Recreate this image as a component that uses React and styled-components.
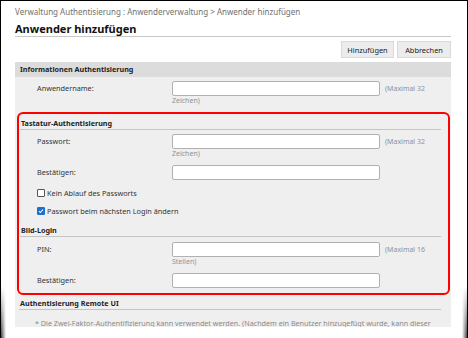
import React from 'react';
import styled, { createGlobalStyle } from 'styled-components';

const GlobalStyle = createGlobalStyle`
  html, body {
    margin: 0;
    padding: 0;
    background: #fff;
  }
  body {
    font-family: 'Noto Sans', 'Open Sans', sans-serif;
    color: #222;
  }
`;

const Frame = styled.div`
  position: relative;
  box-sizing: border-box;
  width: 468px;
  height: 338px;
  border-top: 1px solid #000;
  border-left: 1px solid #000;
  border-right: 1px solid #000;
  padding: 0 16px 0 14px;
  overflow: hidden;

  &::before,
  &::after {
    content: '';
    position: absolute;
    top: 285px;
    bottom: 0;
    width: 6px;
    -webkit-mask-image: linear-gradient(to bottom, transparent, #000);
  }
  &::before {
    left: -1px;
    background: linear-gradient(to right, rgba(0, 0, 0, 0.9), rgba(0, 0, 0, 0));
  }
  &::after {
    right: -1px;
    background: linear-gradient(to left, rgba(0, 0, 0, 0.9), rgba(0, 0, 0, 0));
  }
`;

const Breadcrumb = styled.div`
  font-size: 8px;
  color: #707070;
  line-height: 10px;
  padding-top: 6px;
  white-space: nowrap;
`;

const Title = styled.h1`
  margin: 5px 0 0;
  font-size: 11px;
  font-weight: 700;
  line-height: 13px;
  color: #111;
  padding-bottom: 1px;
  border-bottom: 1px solid #c8c8c8;
`;

const ButtonBar = styled.div`
  display: flex;
  justify-content: flex-end;
  gap: 3px;
  margin-top: 4px;
`;

const Button = styled.button`
  height: 17px;
  padding: 0;
  font-family: inherit;
  font-size: 7.4px;
  color: #222;
  background: #ececec;
  border: 1px solid #dadada;
  border-radius: 0;
  width: ${props => props.w}px;
`;

const Panel = styled.div`
  margin-top: 4px;
  background: #efefef;
  height: 265px;
  overflow: hidden;
`;

const PanelHeader = styled.div`
  height: 15px;
  line-height: 15px;
  background: #dcdcdc;
  font-size: 7.2px;
  font-weight: 700;
  padding-left: 5px;
  color: #222;
`;

const Row = styled.div`
  display: grid;
  grid-template-columns: ${props => props.labelWidth}px 208px 1fr;
  align-items: start;
  margin-top: ${props => props.top || 0}px;
`;

const Label = styled.div`
  font-size: 7.3px;
  line-height: 15px;
  padding-left: ${props => props.indent}px;
  color: #333;
`;

const Input = styled.input`
  box-sizing: border-box;
  height: 15px;
  width: 208px;
  margin: 0;
  border: 1px solid #b0b0b0;
  border-radius: 2px;
  background: #fff;
`;

const Note = styled.div`
  font-size: 7px;
  line-height: 15px;
  color: #8e929c;
  padding-left: 5px;
  white-space: nowrap;
`;

const SubNote = styled.div`
  grid-column: 2 / 4;
  font-size: 7px;
  line-height: 9px;
  color: #8e929c;
`;

const Highlight = styled.div`
  margin: 7px 1px 0 2px;
  border: 2px solid #f00;
  border-radius: 6px;
  padding-bottom: 5px;
`;

const SectionTitle = styled.div`
  margin: ${props => props.top || 0}px 7px 0 1px;
  padding: ${props => (props.tight ? 2 : 3)}px 0 0 1px;
  font-size: 7.2px;
  font-weight: 700;
  line-height: 12px;
  color: #222;
  border-bottom: 1px solid #c4c4c4;
`;

const CheckRow = styled.label`
  display: flex;
  align-items: center;
  gap: 2px;
  margin: ${props => props.top}px 0 0 18px;
  font-size: 7.3px;
  line-height: 10px;
  color: #333;
`;

const Box = styled.span`
  box-sizing: border-box;
  width: 8px;
  height: 8px;
  border: 1px solid ${props => (props.checked ? '#1d6fd0' : '#555')};
  border-radius: 1px;
  background: ${props => (props.checked ? '#1d6fd0' : '#fff')};
  display: flex;
  align-items: center;
  justify-content: center;
`;

const Outside = styled.div`
  padding: 0 3px 0 3px;
`;

const FootNote = styled.div`
  margin-top: 8px;
  padding-left: 17px;
  font-size: 7.2px;
  line-height: 10px;
  color: #8a8a8a;
  white-space: nowrap;
`;

function Field({ label, note, sub, indent, labelWidth, top }) {
  return (
    <Row labelWidth={labelWidth} top={top}>
      <Label indent={indent}>{label}</Label>
      <Input type="text" />
      <Note>{note}</Note>
      {sub && <SubNote>{sub}</SubNote>}
    </Row>
  );
}

function Check({ checked, children, top }) {
  return (
    <CheckRow top={top}>
      <Box checked={checked}>
        {checked && (
          <svg width="6" height="6" viewBox="0 0 6 6">
            <path d="M1 3.2 L2.4 4.5 L5 1.5" stroke="#fff" strokeWidth="1.1" fill="none" />
          </svg>
        )}
      </Box>
      {children}
    </CheckRow>
  );
}

export default function App() {
  return (
    <>
      <GlobalStyle />
      <Frame>
        <Breadcrumb>Verwaltung Authentisierung : Anwenderverwaltung &gt; Anwender hinzufügen</Breadcrumb>
        <Title>Anwender hinzufügen</Title>
        <ButtonBar>
          <Button w={53}>Hinzufügen</Button>
          <Button w={54}>Abbrechen</Button>
        </ButtonBar>
        <Panel>
          <PanelHeader>Informationen Authentisierung</PanelHeader>
          <Field
            label="Anwendername:"
            note="(Maximal 32"
            sub="Zeichen)"
            indent={22}
            labelWidth={157}
            top={4}
          />
          <Highlight>
            <SectionTitle>Tastatur-Authentisierung</SectionTitle>
            <Field
              label="Passwort:"
              note="(Maximal 32"
              sub="Zeichen)"
              indent={18}
              labelWidth={153}
              top={4}
            />
            <Field label="Bestätigen:" indent={18} labelWidth={153} top={7} />
            <Check top={8}>Kein Ablauf des Passworts</Check>
            <Check top={8} checked>
              Passwort beim nächsten Login ändern
            </Check>
            <SectionTitle top={5}>Bild-Login</SectionTitle>
            <Field
              label="PIN:"
              note="(Maximal 16"
              sub="Stellen)"
              indent={18}
              labelWidth={153}
              top={5}
            />
            <Field label="Bestätigen:" indent={18} labelWidth={153} top={7} />
          </Highlight>
          <Outside>
            <SectionTitle tight>Authentisierung Remote UI</SectionTitle>
            <FootNote>
              * Die Zwei-Faktor-Authentifizierung kann verwendet werden. (Nachdem ein Benutzer hinzugefügt wurde, kann dieser
            </FootNote>
          </Outside>
        </Panel>
      </Frame>
    </>
  );
}
